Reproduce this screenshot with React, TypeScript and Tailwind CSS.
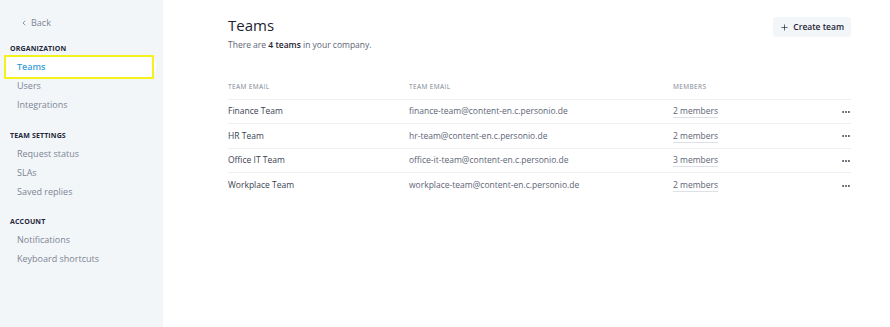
import { ChevronLeft, Plus, MoreHorizontal } from 'lucide-react';

const teams = [
  { name: 'Finance Team', email: 'finance-team@content-en.c.personio.de', members: 2 },
  { name: 'HR Team', email: 'hr-team@content-en.c.personio.de', members: 2 },
  { name: 'Office IT Team', email: 'office-it-team@content-en.c.personio.de', members: 3 },
  { name: 'Workplace Team', email: 'workplace-team@content-en.c.personio.de', members: 2 },
];

const sections = [
  { title: 'Organization', items: ['Teams', 'Users', 'Integrations'] },
  { title: 'Team settings', items: ['Request status', 'SLAs', 'Saved replies'] },
  { title: 'Account', items: ['Notifications', 'Keyboard shortcuts'] },
];

function Sidebar() {
  return (
    <aside className="w-[163px] shrink-0 bg-[#f3f6f9] min-h-[327px] pt-[16px]">
      <div className="flex items-center gap-[3px] pl-[20px] h-[13px] text-[9px] text-[#7c8595]">
        <ChevronLeft size={8} strokeWidth={2.5} />
        <span>Back</span>
      </div>

      {sections.map((s, i) => (
        <div key={s.title} className={i === 0 ? 'mt-[14px]' : 'mt-[15px]'}>
          <div className="pl-[10px] h-[12px] leading-[12px] text-[7px] font-bold uppercase tracking-[0.02em] text-[#23283a]">
            {s.title}
          </div>
          <div className="mt-[2.5px] flex flex-col">
            {s.items.map(item => {
              const active = item === 'Teams';
              if (active) {
                // focused item: taller white pill with a yellow focus ring
                return (
                  <div key={item} className="ml-[5px] -my-[1.5px] w-[148px] h-[22px] outline outline-2 -outline-offset-1 outline-[#f5f11a]">
                    <div className="w-[151px] h-full pl-[12px] flex items-center rounded-r-full bg-white text-[9px] font-semibold text-[#3b9fd8]">
                      {item}
                    </div>
                  </div>
                );
              }
              return (
                <div key={item} className="ml-[5px] h-[19px] pl-[12px] flex items-center text-[9px] text-[#7c8595]">
                  {item}
                </div>
              );
            })}
          </div>
        </div>
      ))}
    </aside>
  );
}

export default function App() {
  return (
    <div className="flex w-[890px] h-[327px] bg-white font-['Open_Sans',sans-serif] overflow-hidden">
      <Sidebar />
      <main className="flex-1 pl-[65px] pr-[39px] pt-[15px]">
        <div className="flex items-start justify-between">
          <div>
            <h1 className="text-[15px] leading-[20px] text-[#1d2333]">Teams</h1>
            <p className="mt-[4px] text-[8.5px] text-[#5d6576]">
              There are <span className="font-semibold text-[#1d2333]">4 teams</span> in your company.
            </p>
          </div>
          <button className="mt-[2px] h-[20px] px-[7px] flex items-center gap-[4px] rounded-[3px] bg-[#f3f6f9] text-[8.5px] font-semibold text-[#1d2333]">
            <Plus size={9} strokeWidth={1.8} />
            Create team
          </button>
        </div>

        <div className="mt-[30px]">
          <div className="grid grid-cols-[181px_264px_1fr_20px] h-[18px] items-start border-b border-[#edf0f3] text-[6.5px] uppercase tracking-[0.06em] text-[#7c8595]">
            <span>Team email</span>
            <span>Team email</span>
            <span>Members</span>
            <span />
          </div>
          {teams.map(t => (
            <div
              key={t.name}
              className="grid grid-cols-[181px_264px_1fr_20px] h-[24.5px] items-center border-b border-[#edf0f3] last:border-b-0 text-[8.5px] text-[#3b4252]"
            >
              <span>{t.name}</span>
              <span className="text-[#5d6576]">{t.email}</span>
              <span>
                <span className="text-[#5d6576] border-b border-[#dde1e7] pb-[1px]">{t.members} members</span>
              </span>
              <span className="flex justify-end text-[#3b4252]">
                <MoreHorizontal size={10} strokeWidth={2.5} />
              </span>
            </div>
          ))}
        </div>
      </main>
    </div>
  );
}
